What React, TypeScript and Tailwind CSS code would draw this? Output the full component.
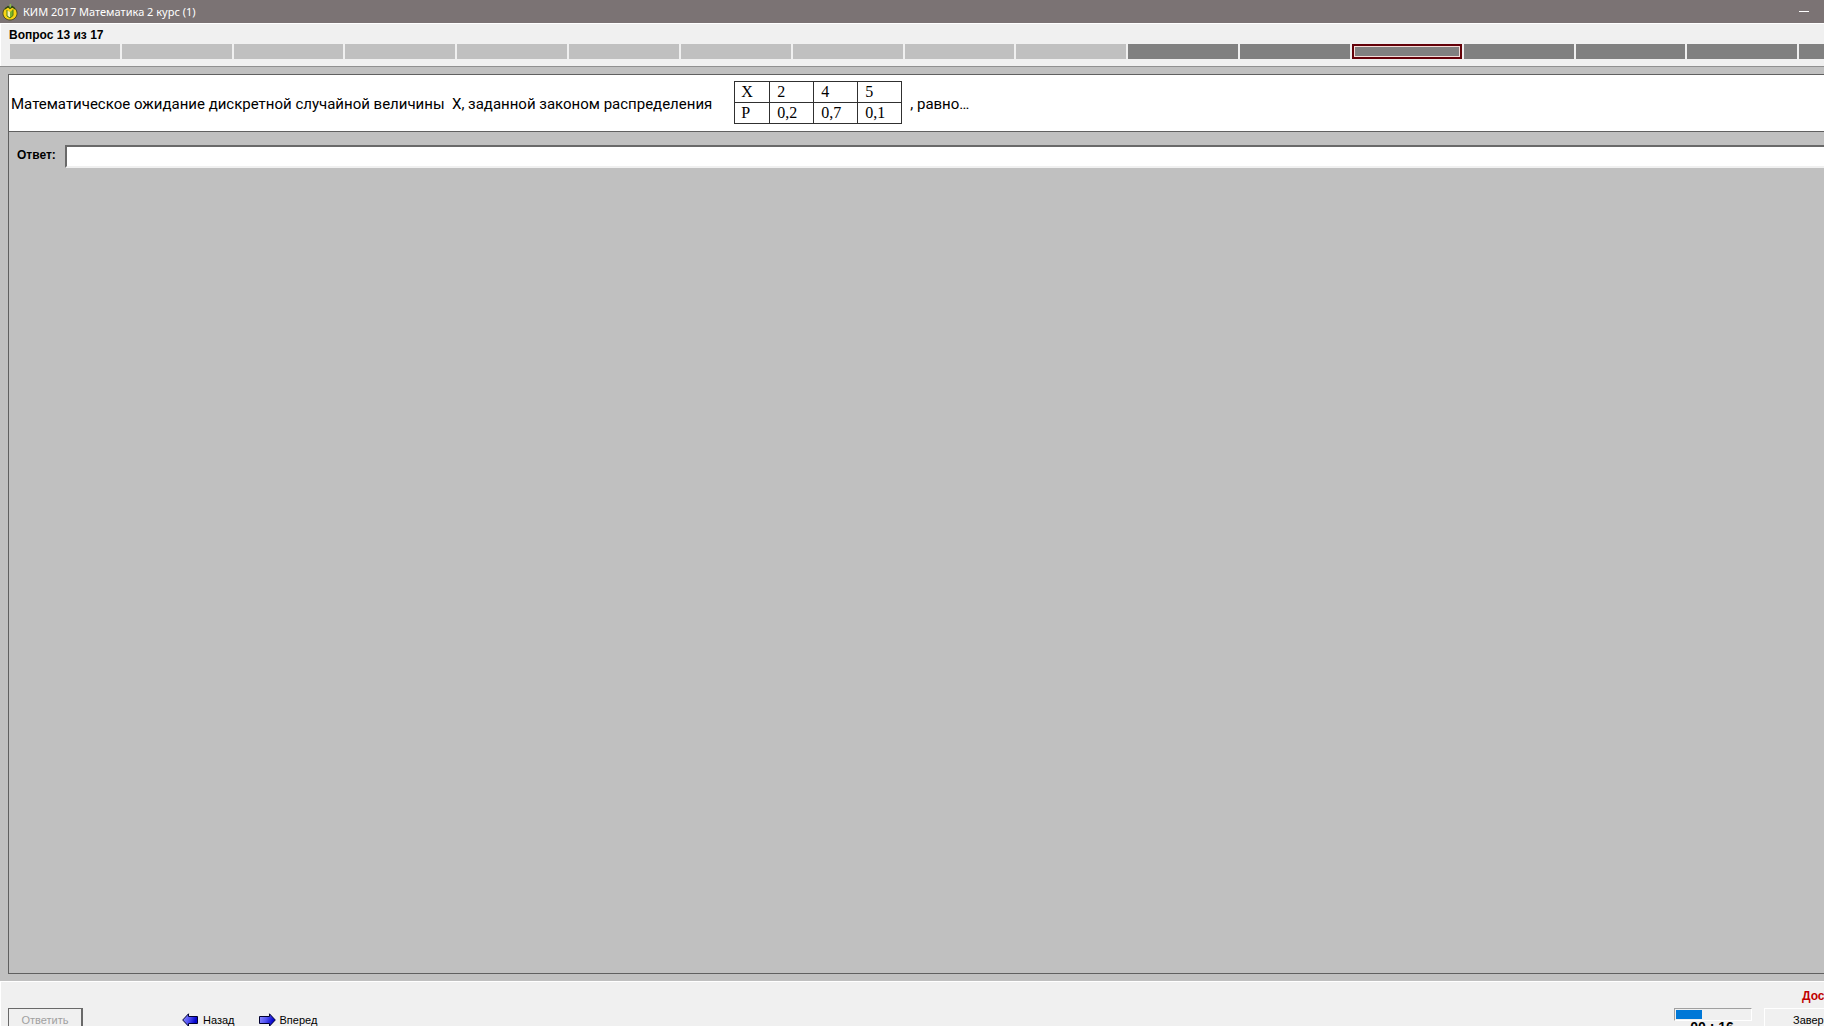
import React, { useState } from "react";

const TOTAL = 17;
const CURRENT = 13;
const ANSWERED = 10;

const distribution = [
  { label: "X", values: ["2", "4", "5"] },
  { label: "P", values: ["0,2", "0,7", "0,1"] },
];

const AppIcon = () => (
  <svg width="16" height="18" viewBox="0 0 16 18" aria-hidden="true">
    <path
      d="M8 4 C3 4 1 7 1 10.5 C1 14 4 17 8 17 C12 17 15 14 15 10.5 C15 7 13 4 8 4 Z"
      fill="#f8d414"
      stroke="#3a3a10"
      strokeWidth="0.8"
    />
    <path d="M5 7.5 L8 9 L8 15 L5 13 Z" fill="#f8f4b0" />
    <path d="M8 9 L11 6.5 L11 12.5 L8 15 Z" fill="#7cb428" />
    <path d="M5 7 V13 L8 15 L11 12.5 V6.5" fill="none" stroke="#4a7a14" strokeWidth="1" />
    <path d="M3 6 L6 3.6 L8 5.4 L10.5 3.6 L13 6" fill="none" stroke="#2f4a12" strokeWidth="1.3" />
    <path d="M7.5 4.5 L7.5 1.2 L9.2 0.8 L9 4.5 Z" fill="#8cc04a" />
  </svg>
);

const Arrow = ({ direction }: { direction: "left" | "right" }) => {
  const id = `arrow-${direction}`;
  return (
    <svg width="17" height="14" viewBox="0 0 17 14" aria-hidden="true">
      <defs>
        <linearGradient id={id} x1="0" y1="0" x2="1" y2="0.3">
          <stop offset="0" stopColor="#9494ff" />
          <stop offset="0.5" stopColor="#5454f4" />
          <stop offset="0.95" stopColor="#0404cc" />
        </linearGradient>
      </defs>
      <path
        d={
          direction === "left"
            ? "M0.7 7 L6.5 0.8 V3.5 H15.5 V10.5 H6.5 V13.2 Z"
            : "M16.3 7 L10.5 0.8 V3.5 H0.5 V10.5 H10.5 V13.2 Z"
        }
        fill={`url(#${id})`}
        stroke="#000030"
      />
    </svg>
  );
};

const TitleBar = () => (
  <header className="flex h-[23px] shrink-0 items-center bg-[#7b7374] pl-[2px] text-white">
    <AppIcon />
    <h1 className="pl-[5px] font-['Noto_Sans',sans-serif] text-[11px] leading-[16px]">
      КИМ 2017 Математика 2 курс (1)
    </h1>
    <button aria-label="Свернуть" className="ml-auto flex h-full w-10 items-center justify-center">
      <span className="h-px w-[10px] bg-white" />
    </button>
  </header>
);

const Steps = () => (
  <section className="h-[43px] shrink-0 border-t border-l border-white bg-[#f0f0f0] pl-2">
    <p className="pt-[3px] text-[12px] font-bold leading-[16px]">
      Вопрос {CURRENT} из {TOTAL}
    </p>
    <div className="ml-px mr-[-85px] mt-px grid h-[15px] grid-cols-[repeat(17,minmax(0,1fr))] gap-[2px]">
      {Array.from({ length: TOTAL }, (_, i) => (
        <div
          key={i}
          className={
            i + 1 === CURRENT
              ? "border-2 border-[#640008] bg-[#808080] outline-1 -outline-offset-3 outline-[#f4dcd8]"
              : i < ANSWERED
                ? "bg-[#c0c0c0]"
                : "bg-[#808080]"
          }
        />
      ))}
    </div>
  </section>
);

const Question = () => (
  <div className="flex h-[57px] items-center border-b border-[#606060] bg-white pb-px pl-[2px] font-['Roboto',sans-serif] text-[15px] leading-[20px]">
    <p className="whitespace-pre pt-[2px]">
      Математическое ожидание дискретной случайной величины  X, заданной законом распределения
    </p>
    <table className="ml-[22px] border-collapse bg-white font-['Liberation_Serif',serif] text-[16px] leading-[20px]">
      <tbody>
        {distribution.map((row) => (
          <tr key={row.label}>
            <th className="w-[35px] border border-[#303030] pl-[6px] text-left font-normal">
              {row.label}
            </th>
            {row.values.map((value) => (
              <td key={value} className="w-[44px] border border-[#303030] pl-[7px]">
                {value}
              </td>
            ))}
          </tr>
        ))}
      </tbody>
    </table>
    <p className="ml-2 pt-[2px]">, равно…</p>
  </div>
);

const Footer = () => (
  <footer className="flex h-[45px] shrink-0 items-start overflow-hidden border-t border-l border-white bg-[#f0f0f0] pl-[7px] text-[11px] leading-[16px]">
    <button
      disabled
      className="mt-[26px] h-6 w-[75px] border border-r-2 border-[#696969] text-[#a0a0a0]"
    >
      Ответить
    </button>
    <button className="ml-[99px] mt-[26px] flex h-6 items-center gap-1">
      <Arrow direction="left" />
      Назад
    </button>
    <button className="ml-6 mt-[26px] flex h-6 items-center gap-1">
      <Arrow direction="right" />
      Вперед
    </button>
    <div className="ml-auto mt-[26px] w-[78px]">
      <div className="h-[13px] border border-t-[#a0a0a0] border-l-[#a0a0a0] border-r-white border-b-white p-px">
        <div className="h-full w-[26px] bg-[#0078d7]" />
      </div>
      <p className="whitespace-pre pr-[2px] text-center text-[14px] font-bold leading-[12px]">
        00 : 16
      </p>
    </div>
    <div className="ml-3 w-[60px] shrink-0">
      <p className="pl-[38px] pt-[6px] text-[12px] font-bold text-[#c00000]">Досрочно</p>
      <button className="mt-1 h-[22px] border-t border-l border-white pl-7 whitespace-nowrap">
        Завершить
      </button>
    </div>
  </footer>
);

export default function App() {
  const [answer, setAnswer] = useState("");

  return (
    <div className="flex h-screen flex-col overflow-hidden bg-[#c0c0c0] font-['Liberation_Sans',sans-serif] text-black">
      <TitleBar />
      <Steps />
      <main className="flex flex-1 flex-col border-t border-[#909090] pb-[7px] pl-2 pt-[7px]">
        <div className="flex-1 border border-r-0 border-[#606060]">
          <Question />
          <div className="flex items-start pl-2 pt-[13px]">
            <label htmlFor="answer" className="w-12 pt-[2px] text-[12px] font-bold leading-[16px]">
              Ответ:
            </label>
            <input
              id="answer"
              value={answer}
              onChange={(e) => setAnswer(e.target.value)}
              className="h-[23px] flex-1 border-2 border-r-0 border-t-[#696969] border-l-[#696969] border-b-[#f0f0f0] bg-white px-1 text-[16px] outline-none"
            />
          </div>
        </div>
      </main>
      <Footer />
    </div>
  );
}
